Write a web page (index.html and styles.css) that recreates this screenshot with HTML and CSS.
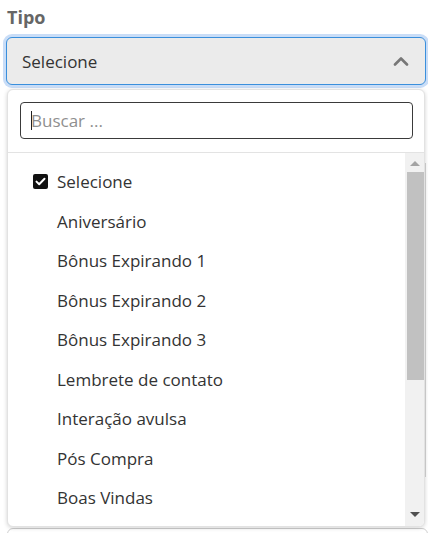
FILE: index.html
```html
<!DOCTYPE html>
<html lang="pt-BR">
<head>
    <meta charset="UTF-8">
    <meta name="viewport" content="width=device-width, initial-scale=1.0">
    <title>Tipo</title>
    <link rel="stylesheet" href="styles.css">
</head>
<body>
    <div class="field">
        <label class="field-label">Tipo</label>
        <div class="select open">
            <span class="select-value">Selecione</span>
            <svg class="chevron" width="16" height="10" viewBox="0 0 16 10">
                <path d="M2 8.5 L8 2.5 L14 8.5" fill="none" stroke="#777" stroke-width="2.6" stroke-linecap="round" stroke-linejoin="round"/>
            </svg>
        </div>

        <div class="dropdown">
            <div class="search">
                <input type="text" class="search-input" placeholder="Buscar ..." autofocus>
                <span class="caret"></span>
            </div>
            <div class="list-wrap">
                <ul class="options">
                    <li class="option selected"><span class="check"><svg width="11" height="9" viewBox="0 0 11 9"><path d="M1.5 4.6 L4.2 7.2 L9.5 1.8" fill="none" stroke="#fff" stroke-width="2" stroke-linecap="round" stroke-linejoin="round"/></svg></span>Selecione</li>
                    <li class="option"><span class="check"></span>Aniversário</li>
                    <li class="option"><span class="check"></span>Bônus Expirando 1</li>
                    <li class="option"><span class="check"></span>Bônus Expirando 2</li>
                    <li class="option"><span class="check"></span>Bônus Expirando 3</li>
                    <li class="option"><span class="check"></span>Lembrete de contato</li>
                    <li class="option"><span class="check"></span>Interação avulsa</li>
                    <li class="option"><span class="check"></span>Pós Compra</li>
                    <li class="option"><span class="check"></span>Boas Vindas</li>
                </ul>
                <div class="scrollbar">
                    <span class="arrow up"></span>
                    <div class="track">
                        <div class="thumb"></div>
                    </div>
                    <span class="arrow down"></span>
                </div>
            </div>
        </div>
    </div>

    <div class="card-behind"></div>
    <div class="next-field"></div>
</body>
</html>
```

FILE: styles.css
```css
html, body {
    height: 533px;
    overflow: hidden;
}
body {
    margin: 0;
    font-family: "Open Sans", "Noto Sans", sans-serif;
    color: #333;
    background: #fff;
}
.field {
    position: relative;
    padding: 6px 2px 0 6px;
}
.field-label {
    display: block;
    font-size: 18px;
    font-weight: 700;
    color: #666;
    line-height: 22px;
    margin: 0 0 9px 1px;
}
.select {
    height: 46px;
    display: flex;
    align-items: center;
    justify-content: space-between;
    padding: 0 15px;
    background: #ebebeb;
    border: 1px solid #ccc;
    border-radius: 6px;
}
.select.open {
    border-color: #3a8fdc;
    box-shadow: 0 0 0 3px #c9ddf7;
}
.select-value {
    font-size: 17px;
}
.chevron {
    margin-right: 1px;
}
.dropdown {
    position: absolute;
    top: 89px;
    left: 7px;
    width: 416px;
    background: #fff;
    border: 1px solid #e2e2e2;
    border-radius: 6px;
    box-shadow: 0 1px 4px rgba(0, 0, 0, 0.18);
    overflow: hidden;
    z-index: 2;
}
.search {
    position: relative;
    padding: 12px 11px 13px 12px;
    border-bottom: 1px solid #e3e3e3;
}
.search-input {
    box-sizing: border-box;
    width: 100%;
    height: 37px;
    padding: 0 10px;
    font-family: inherit;
    font-size: 17px;
    color: #333;
    border: 1px solid #3a3a3a;
    border-radius: 4px;
    outline: none;
    caret-color: transparent;
}
.search-input::placeholder {
    color: #8f8f8f;
}
.caret {
    position: absolute;
    left: 23px;
    top: 21px;
    width: 1px;
    height: 19px;
    background: #222;
}
.list-wrap {
    display: flex;
    height: 373px;
}
.options {
    flex: 1;
    list-style: none;
    margin: 0;
    padding: 9px 0 0 0;
    overflow: hidden;
}
.option {
    height: 39.5px;
    display: flex;
    align-items: center;
    padding-left: 25px;
    font-size: 17px;
    color: #333;
}
.check {
    width: 15px;
    height: 15px;
    margin-right: 9px;
    border-radius: 2px;
    display: flex;
    align-items: center;
    justify-content: center;
}
.option.selected .check {
    background: #111;
}
.scrollbar {
    width: 19px;
    background: #f1f1f1;
    display: flex;
    flex-direction: column;
    align-items: center;
}
.arrow {
    width: 0;
    height: 0;
    border-left: 5px solid transparent;
    border-right: 5px solid transparent;
}
.arrow.up {
    margin: 8px 0 6px;
    border-bottom: 5px solid #a3a3a3;
}
.arrow.down {
    margin: 6px 0 9px;
    border-top: 5px solid #505050;
}
.track {
    flex: 1;
    align-self: stretch;
    padding-left: 2px;
}
.thumb {
    height: 208px;
    background: #c1c1c1;
}
.card-behind {
    margin: 78px 2px 0 120px;
    height: 312px;
    border: 1px solid #d6d6d6;
}
.next-field {
    margin: 51px 0 0 7px;
    height: 20px;
    border: 1px solid #cfcfcf;
    border-radius: 6px;
}
```
